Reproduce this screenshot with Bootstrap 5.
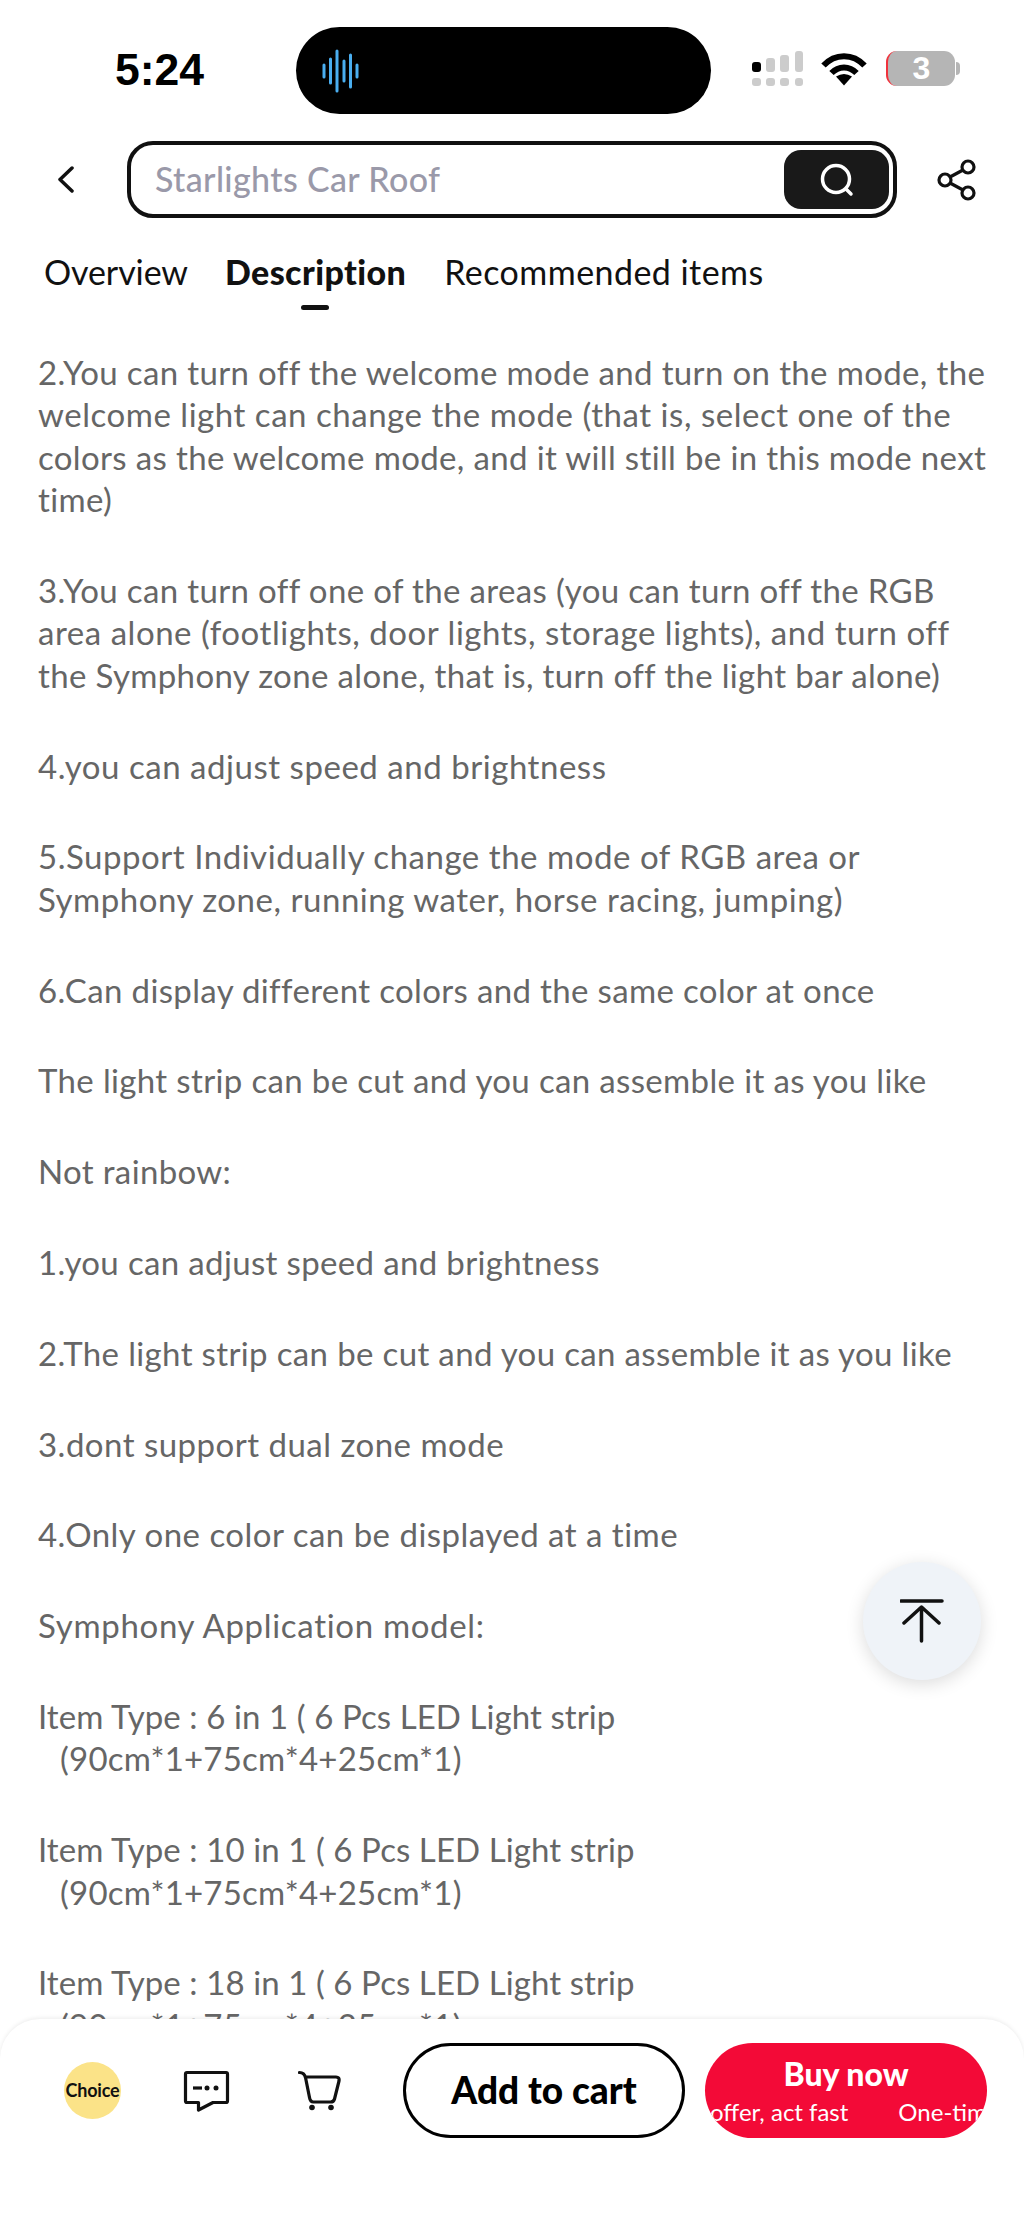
<!doctype html>
<html lang="en"><head><meta charset="utf-8"><title>Description</title>
<link href="https://cdn.jsdelivr.net/npm/bootstrap@5.3.0/dist/css/bootstrap.min.css" rel="stylesheet">
<style>
html,body{margin:0;background:#fff}
.phone{width:1024px;height:2219px;overflow:hidden;position:relative;background:#fff;font-family:Lato,"Noto Sans",sans-serif}
.statusbar{height:141px;padding-top:27px}
.clock{width:296px;padding-left:115px;padding-top:18px;font:700 44.5px/50px "Liberation Sans",sans-serif;color:#000}
.island{width:415px;height:87px;border-radius:44px;background:#000;padding-left:25px}
.status-right{padding-left:41px;padding-top:24px;gap:17px}
.wifi{margin-top:1px}
.batt{width:69px;height:35px;border-radius:11px;background:#b5b5b5;border-left:2px solid #f0323c;color:#fff;font:700 32px/35px "Liberation Sans",sans-serif;text-align:center;position:relative;margin-left:2px}
.batt::after{content:"";position:absolute;left:68px;top:11px;width:4px;height:13px;border-radius:0 4px 4px 0;background:#b5b5b5}
.searchrow{height:77px}
.backbtn{width:127px;padding-left:57px}
.searchbox{width:770px;height:77px;border:4px solid #111;border-radius:26px;padding:5px 4px 5px 24px;font-size:34px;font-weight:500;color:#9a99a9;letter-spacing:.35px}
.searchbox span{padding-bottom:2px}
.searchbtn{width:105px;height:59px;border-radius:17px;background:#191919}
.sharebtn{padding-left:40px}
.tabs{padding:30px 0 0 44px;font-size:34px;line-height:48px;color:#111}
.tab-a{letter-spacing:-.1px;margin-right:37px}
.tab-on{font-weight:900;position:relative;letter-spacing:.4px;margin-right:38px}
.tab-c{letter-spacing:.45px}
.tab-on::after{content:"";position:absolute;left:76px;top:57px;width:28px;height:5px;border-radius:3px;background:#111}
.desc{padding:55px 0 0 38px;font-size:33px;line-height:42.4px;color:#666;white-space:nowrap;letter-spacing:.35px}
.desc p{margin:0 0 48.4px}
.t-wide{letter-spacing:.53px}
.t-mid{letter-spacing:.48px}
.t-xwide{letter-spacing:.68px}
.t-tight{letter-spacing:.08px}
.hang{display:block;padding-left:22px;letter-spacing:.22px}
.totop{position:absolute;left:863px;top:1562px;width:118px;height:118px;border-radius:50%;background:#eff3f8;box-shadow:0 4px 18px rgba(0,0,0,.14)}
.sheet{position:absolute;left:0;top:2019px;width:1024px;height:200px;background:#fff;border-radius:40px 40px 0 0;box-shadow:0 -1px 4px rgba(0,0,0,.08);padding-top:24px}
.choice{margin-left:64px;margin-top:19px;width:57px;height:57px;border-radius:50%;background:#fbe388;font-size:18px;font-weight:700;color:#111;letter-spacing:-.2px}
.msgicon{margin-left:62px;margin-top:27px}
.carticon{margin-left:68px;margin-top:27px}
.addbtn{margin-left:61px;width:282px;height:95px;border:3px solid #000;border-radius:48px;background:#fff;color:#000;font-size:37px;font-weight:900;padding-bottom:2px}
.buybtn{margin-left:20px;width:282px;height:95px;border-radius:48px;background:#f30a37;color:#fff;overflow:hidden;white-space:nowrap}
.buytop{font-size:32px;font-weight:900;line-height:40px;text-align:center;padding-top:11px}
.buysub{font-size:24px;line-height:30px;padding:3px 0 0 5px;gap:50px;margin-right:4px;overflow:hidden}
</style></head><body>
<div class="phone">
 <div class="statusbar d-flex align-items-start">
  <div class="clock">5:24</div>
  <div class="island d-flex align-items-center">
   <svg width="40" height="44" viewBox="0 0 40 44" fill="none" stroke="#4aaef0" stroke-width="3" stroke-linecap="round"><path d="M3 16v12M9.500 10v24M16 2v40M23 12v20M29.500 6v32M36 16v12"/></svg>
  </div>
  <div class="status-right d-flex align-items-start">
   <svg width="52" height="36" viewBox="0 0 52 36">
    <g fill="#ccc"><rect x="14" y="7" width="9" height="14" rx="3"/><rect x="28" y="4" width="9" height="17" rx="3"/><rect x="43" y="0" width="8" height="21" rx="3"/>
    <rect x="0" y="27" width="9" height="8" rx="3"/><rect x="14" y="27" width="9" height="8" rx="3"/><rect x="28" y="27" width="9" height="8" rx="3"/><rect x="43" y="27" width="8" height="8" rx="3"/></g>
    <rect x="0" y="11" width="9" height="10" rx="3" fill="#000"/>
   </svg>
   <svg class="wifi" width="46" height="34" viewBox="0 0 46 34" fill="none" stroke="#000" stroke-width="6"><path d="M2.500 13.500C14 1 32 1 43.500 13.500"/><path d="M10.500 21C17.500 13.500 28.500 13.500 35.500 21"/><path d="M15 24.500Q23 19.500 31 24.500L23 33.500Z" fill="#000" stroke="none"/></svg>
   <div class="batt">3</div>
  </div>
 </div>
 <div class="searchrow d-flex align-items-center">
  <div class="backbtn"><svg width="18" height="27" viewBox="0 0 18 27" fill="none" stroke="#111" stroke-width="3.500" stroke-linecap="round" stroke-linejoin="round"><path d="M15 2 3 13.500 15 25"/></svg></div>
  <div class="searchbox d-flex align-items-center justify-content-between">
   <span>Starlights Car Roof</span>
   <div class="searchbtn d-flex align-items-center justify-content-center"><svg width="36" height="36" viewBox="0 0 36 36" fill="none" stroke="#fff" stroke-width="3.500" stroke-linecap="round"><circle cx="17" cy="17" r="13.500"/><path d="m27 27 5 5"/></svg></div>
  </div>
  <div class="sharebtn"><svg width="40" height="42" viewBox="0 0 40 42" fill="none" stroke="#111" stroke-width="3.200"><circle cx="8" cy="21" r="6"/><circle cx="31" cy="8" r="6"/><circle cx="31" cy="34" r="6"/><path d="m13 18 13-7M13 24l13 7"/></svg></div>
 </div>
 <div class="tabs d-flex"><span class="tab-a">Overview</span><span class="tab-on">Description</span><span class="tab-c">Recommended items</span></div>
 <div class="desc">
  <p>2.You can turn off the welcome mode and turn on the mode, the<br><span class="t-wide">welcome light can change the mode (that is, select one of the</span><br>colors as the welcome mode, and it will still be in this mode next<br>time)</p>
  <p>3.You can turn off one of the areas (you can turn off the RGB<br><span class="t-wide">area alone (footlights, door lights, storage lights), and turn off</span><br>the Symphony zone alone, that is, turn off the light bar alone)</p>
  <p class="t-wide">4.you can adjust speed and brightness</p>
  <p class="t-wide">5.Support Individually change the mode of RGB area or<br>Symphony zone, running water, horse racing, jumping)</p>
  <p>6.Can display different colors and the same color at once</p>
  <p>The light strip can be cut and you can assemble it as you like</p>
  <p>Not rainbow:</p>
  <p>1.you can adjust speed and brightness</p>
  <p>2.The light strip can be cut and you can assemble it as you like</p>
  <p class="t-mid">3.dont support dual zone mode</p>
  <p class="t-mid">4.Only one color can be displayed at a time</p>
  <p class="t-xwide">Symphony Application model:</p>
  <p class="t-tight">Item Type : 6 in 1 ( 6 Pcs LED Light strip<span class="hang">(90cm*1+75cm*4+25cm*1)</span></p>
  <p class="t-tight">Item Type : 10 in 1 ( 6 Pcs LED Light strip<span class="hang">(90cm*1+75cm*4+25cm*1)</span></p>
  <p class="t-tight">Item Type : 18 in 1 ( 6 Pcs LED Light strip<span class="hang">(90cm*1+75cm*4+25cm*1)</span></p>
 </div>
 <div class="totop d-flex align-items-center justify-content-center"><svg width="44" height="44" viewBox="0 0 44 44" fill="none" stroke="#111" stroke-width="3.500" stroke-linecap="round" stroke-linejoin="round"><path d="M1 2h41M21.500 11v31M4 24 21.500 8 39 24"/></svg></div>
 <div class="sheet d-flex align-items-start">
  <div class="choice d-flex align-items-center justify-content-center">Choice</div>
  <div class="msgicon"><svg width="47" height="42" viewBox="0 0 47 42" fill="none" stroke="#111" stroke-width="3.200" stroke-linejoin="round"><path d="M4 2.500h39a1.500 1.500 0 0 1 1.500 1.500v27a1.500 1.500 0 0 1-1.500 1.500H30L15.500 40v-7.500H4A1.500 1.500 0 0 1 2.500 31V4A1.500 1.500 0 0 1 4 2.500z"/><path d="M10 18h9"/><circle cx="24" cy="18" r="2.500" fill="#111" stroke="none"/><circle cx="33" cy="18" r="2.500" fill="#111" stroke="none"/></svg></div>
  <div class="carticon"><svg width="44" height="41" viewBox="0 0 44 41" fill="none" stroke="#111" stroke-width="3.200" stroke-linecap="round" stroke-linejoin="round"><path d="M1.500 2.500c3 0 5 1 6 5l4 20c.5 3 2 4.500 4 4.500h17c2 0 3.500-1 4-3l4.500-18c.5-2.500-.5-4-3-4H8"/><circle cx="14" cy="37.500" r="2.800" fill="#111" stroke="none"/><circle cx="33" cy="37.500" r="2.800" fill="#111" stroke="none"/></svg></div>
  <div class="addbtn d-flex align-items-center justify-content-center">Add to cart</div>
  <div class="buybtn">
   <div class="buytop">Buy now</div>
   <div class="buysub d-flex"><span>offer, act fast</span><span>One-time offer</span></div>
  </div>
 </div>
</div>
<script src="https://cdn.jsdelivr.net/npm/bootstrap@5.3.0/dist/js/bootstrap.bundle.min.js"></script>
</body></html>
